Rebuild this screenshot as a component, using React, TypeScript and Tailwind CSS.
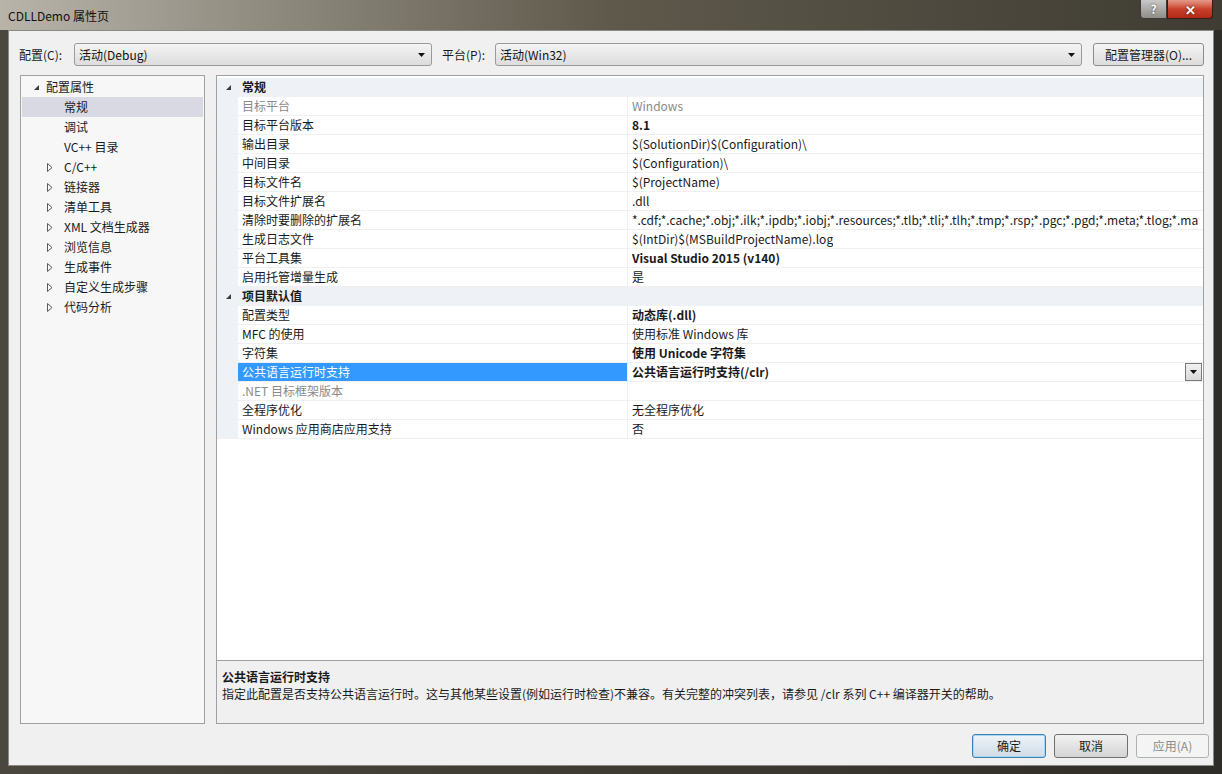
import React from "react";

const FONT = { fontFamily: '"Noto Sans CJK SC", "Noto Sans", sans-serif' } as React.CSSProperties;

function ExpandedTri() {
  return (
    <svg width="7" height="7" viewBox="0 0 7 7" className="shrink-0">
      <path d="M6 1 L6 6 L1 6 Z" fill="#3c3c3c" />
    </svg>
  );
}

function CollapsedTri() {
  return (
    <svg width="6" height="9" viewBox="0 0 6 9" className="shrink-0">
      <path d="M0.5 0.5 L5 4.5 L0.5 8.5 Z" fill="none" stroke="#5a5a5a" strokeWidth="1" />
    </svg>
  );
}

function DownArrow() {
  return (
    <svg width="7" height="4" viewBox="0 0 7 4">
      <path d="M0 0 L7 0 L3.5 4 Z" fill="#111" />
    </svg>
  );
}

function Combo({ text, w }: { text: string; w: string }) {
  return (
    <div
      className={`${w} h-[23px] flex items-center justify-between pl-[4px] pr-[6px] border border-[#9a9a9a] rounded-[3px] bg-gradient-to-b from-[#f4f4f4] to-[#dddddd]`}
    >
      <span className="text-[12px] text-[#111]">{text}</span>
      <DownArrow />
    </div>
  );
}

type TreeItem = { label: string; kind: "root" | "leaf" | "collapsed"; selected?: boolean };
const tree: TreeItem[] = [
  { label: "配置属性", kind: "root" },
  { label: "常规", kind: "leaf", selected: true },
  { label: "调试", kind: "leaf" },
  { label: "VC++ 目录", kind: "leaf" },
  { label: "C/C++", kind: "collapsed" },
  { label: "链接器", kind: "collapsed" },
  { label: "清单工具", kind: "collapsed" },
  { label: "XML 文档生成器", kind: "collapsed" },
  { label: "浏览信息", kind: "collapsed" },
  { label: "生成事件", kind: "collapsed" },
  { label: "自定义生成步骤", kind: "collapsed" },
  { label: "代码分析", kind: "collapsed" },
];

type Row =
  | { cat: string }
  | { name: string; value: string; bold?: boolean; grayName?: boolean; grayValue?: boolean; selected?: boolean };

const rows: Row[] = [
  { cat: "常规" },
  { name: "目标平台", value: "Windows", grayName: true, grayValue: true },
  { name: "目标平台版本", value: "8.1", bold: true },
  { name: "输出目录", value: "$(SolutionDir)$(Configuration)\\" },
  { name: "中间目录", value: "$(Configuration)\\" },
  { name: "目标文件名", value: "$(ProjectName)" },
  { name: "目标文件扩展名", value: ".dll" },
  {
    name: "清除时要删除的扩展名",
    value: "*.cdf;*.cache;*.obj;*.ilk;*.ipdb;*.iobj;*.resources;*.tlb;*.tli;*.tlh;*.tmp;*.rsp;*.pgc;*.pgd;*.meta;*.tlog;*.ma",
  },
  { name: "生成日志文件", value: "$(IntDir)$(MSBuildProjectName).log" },
  { name: "平台工具集", value: "Visual Studio 2015 (v140)", bold: true },
  { name: "启用托管增量生成", value: "是" },
  { cat: "项目默认值" },
  { name: "配置类型", value: "动态库(.dll)", bold: true },
  { name: "MFC 的使用", value: "使用标准 Windows 库" },
  { name: "字符集", value: "使用 Unicode 字符集", bold: true },
  { name: "公共语言运行时支持", value: "公共语言运行时支持(/clr)", bold: true, selected: true },
  { name: ".NET 目标框架版本", value: "", grayName: true },
  { name: "全程序优化", value: "无全程序优化" },
  { name: "Windows 应用商店应用支持", value: "否" },
];

export default function App() {
  return (
    <div
      style={FONT}
      className="w-[1222px] h-[774px] flex flex-col overflow-hidden bg-gradient-to-r from-[#4a473e] via-[#3e3b33] to-[#2f2d27]"
    >
      {/* Title bar */}
      <div className="h-[30px] shrink-0 relative bg-gradient-to-r from-[#b8b4aa] via-[#5e594b] to-[#3f3c33]">
        <div className="absolute left-[8px] top-[7px] text-[12px] text-[#101010] leading-[18px]">CDLLDemo 属性页</div>
        <div className="absolute left-[1140px] top-0 w-[27px] h-[19px] border border-[#3a3a3a] border-t-0 rounded-bl-[4px] bg-gradient-to-b from-[#c9c9c9] to-[#8f8d86] flex items-center justify-center">
          <span className="text-[12px] font-bold text-white leading-none" style={{ textShadow: "0 0 2px #333" }}>?</span>
        </div>
        <div className="absolute left-[1167px] top-0 w-[46px] h-[19px] border border-[#3a1a12] border-t-0 rounded-br-[4px] bg-gradient-to-b from-[#e49a8a] via-[#c9402a] to-[#b02a18] flex items-center justify-center">
          <span className="text-[13px] font-bold text-white leading-none" style={{ textShadow: "0 0 2px #400" }}>✕</span>
        </div>
      </div>

      {/* Client area */}
      <div className="flex-1 mx-[8px] mb-[8px] bg-[#f0f0f0] border border-[#8a8a85] flex flex-col text-[12px] text-[#1a1a1a]">
        {/* config row */}
        <div className="flex items-center mt-[12px] pl-[10px] h-[23px]">
          <span className="w-[55px]">配置(C):</span>
          <Combo text="活动(Debug)" w="w-[358px]" />
          <span className="ml-[10px] w-[53px]">平台(P):</span>
          <Combo text="活动(Win32)" w="w-[587px]" />
          <div className="ml-[11px] w-[111px] h-[23px] border border-[#8c8c8c] rounded-[3px] bg-gradient-to-b from-[#f5f5f5] to-[#dcdcdc] flex items-center justify-center">
            配置管理器(O)...
          </div>
        </div>

        {/* main */}
        <div className="flex mt-[9px] ml-[11px]">
          {/* tree */}
          <div className="w-[185px] h-[649px] bg-[#f7f7f7] border border-[#a0a0a0] pt-[1px] px-[1px]">
            {tree.map((t, i) => (
              <div
                key={i}
                className={`h-[20px] flex items-center ${t.selected ? "bg-[#d8d9e3]" : ""}`}
              >
                {t.kind === "root" ? (
                  <>
                    <span className="w-[24px] flex justify-end pr-[6px]">
                      <ExpandedTri />
                    </span>
                    <span>{t.label}</span>
                  </>
                ) : t.kind === "collapsed" ? (
                  <>
                    <span className="w-[42px] flex justify-end pr-[11px]">
                      <CollapsedTri />
                    </span>
                    <span>{t.label}</span>
                  </>
                ) : (
                  <span className="pl-[42px]">{t.label}</span>
                )}
              </div>
            ))}
          </div>

          {/* right panel */}
          <div className="ml-[11px] w-[988px] flex flex-col">
            <div className="h-[586px] bg-white border border-[#a0a0a0] overflow-hidden pt-[2px]">
              {rows.map((r, i) =>
                "cat" in r ? (
                  <div key={i} className="h-[19px] flex items-center bg-[#eef1f5] border-b border-[#eef1f5]">
                    <span className="w-[21px] flex justify-center pl-[2px]">
                      <ExpandedTri />
                    </span>
                    <span className="pl-[4px] font-bold">{r.cat}</span>
                  </div>
                ) : (
                  <div key={i} className="h-[19px] flex border-b border-[#f0f0f0]">
                    <div className="w-[21px] bg-[#eef1f5] shrink-0" />
                    <div
                      className={`w-[390px] shrink-0 pl-[4px] flex items-center whitespace-nowrap border-r border-[#f0f0f0] ${
                        r.selected ? "bg-[#3399ff] text-white" : r.grayName ? "text-[#8a8a8a]" : ""
                      }`}
                    >
                      {r.name}
                    </div>
                    <div
                      className={`flex-1 min-w-0 pl-[4px] flex items-center justify-between overflow-hidden whitespace-nowrap ${
                        r.bold ? "font-bold" : ""
                      } ${r.grayValue ? "text-[#8a8a8a]" : ""}`}
                    >
                      <span className="overflow-hidden">{r.value}</span>
                      {r.selected && (
                        <span className="w-[17px] h-[18px] shrink-0 mr-[1px] border border-[#7a7a7a] bg-gradient-to-b from-[#f2f2f2] to-[#d8d8d8] flex items-center justify-center">
                          <DownArrow />
                        </span>
                      )}
                    </div>
                  </div>
                )
              )}
            </div>
            <div className="h-[63px] border border-t-0 border-[#a0a0a0] bg-[#f0f0f0] pl-[5px] pt-[7px] leading-[17px]">
              <div className="font-bold">公共语言运行时支持</div>
              <div>指定此配置是否支持公共语言运行时。这与其他某些设置(例如运行时检查)不兼容。有关完整的冲突列表，请参见 /clr 系列 C++ 编译器开关的帮助。</div>
            </div>
          </div>
        </div>

        {/* buttons */}
        <div className="flex justify-end gap-[8px] mt-[10px] pr-[4px]">
          <div className="w-[74px] h-[24px] rounded-[3px] border border-[#3c7fb1] bg-gradient-to-b from-[#eef5fa] to-[#cfdbe5] flex items-center justify-center shadow-[inset_0_0_0_1px_#a8d7f2]">
            确定
          </div>
          <div className="w-[74px] h-[24px] rounded-[3px] border border-[#707070] bg-gradient-to-b from-[#f2f2f2] to-[#d4d4d4] flex items-center justify-center">
            取消
          </div>
          <div className="w-[73px] h-[24px] rounded-[3px] border border-[#adb2b5] bg-[#f4f4f4] flex items-center justify-center text-[#8a8a8a]">
            应用(A)
          </div>
        </div>
      </div>
    </div>
  );
}
